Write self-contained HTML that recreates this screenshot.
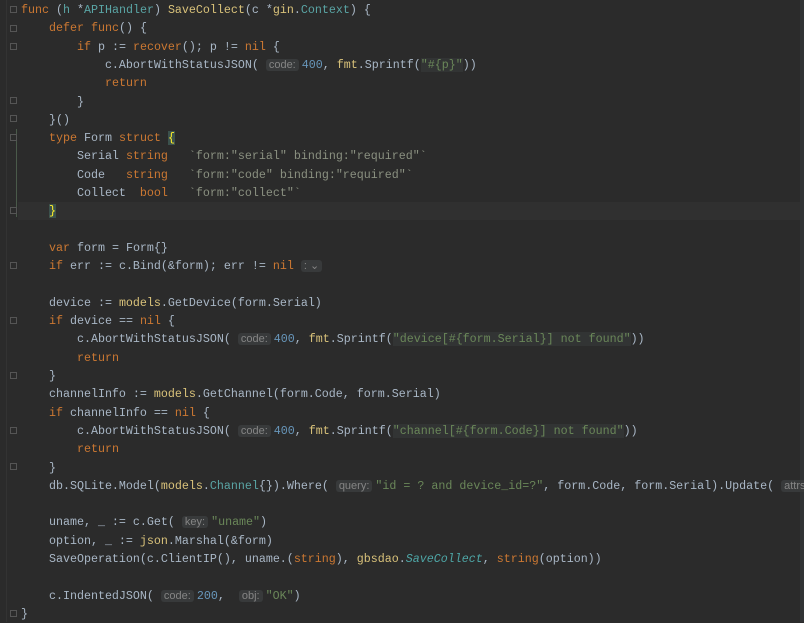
<!DOCTYPE html>
<html><head><meta charset="utf-8"><style>
body{margin:0;width:804px;height:622px;background:#2b2b2b;overflow:hidden;position:relative;font-family:"Liberation Mono",monospace;font-size:11.67px;color:#a9b7c6}
.l{position:absolute;left:21px;height:18.3px;line-height:18.3px;white-space:pre}
.k{color:#cc7832}.f{color:#d9c27a}.t{color:#5aa5a5}.n{color:#6897bb}.s{color:#6a8759}.g{color:#8a9080}.i{color:#4ea6a6;font-style:italic}
.h{background:#383a3b;color:#858585;font-family:"Liberation Sans",sans-serif;font-size:11px;padding:0 3px;border-radius:3px;margin-right:3px}
.sb{background:#323434}
.cur{position:absolute;left:18px;right:0;top:202px;height:18.3px;background:#303030}
.fold{position:absolute;left:10px;width:7px;height:7px;border:1px solid #555;box-sizing:border-box}
</style></head><body>
<div class="cur"></div>
<div style="position:absolute;left:16px;top:129px;width:1px;height:88px;background:#4a5a4a"></div>
<div style="position:absolute;left:6px;top:0;width:1px;height:622px;background:#333"></div>
<div style="position:absolute;left:800px;top:0;width:4px;height:622px;background:#313335"></div>
<div class="fold" style="top:6px"></div><div class="fold" style="top:25px"></div><div class="fold" style="top:43px"></div><div class="fold" style="top:97px"></div><div class="fold" style="top:115px"></div><div class="fold" style="top:134px"></div><div class="fold" style="top:207px"></div><div class="fold" style="top:317px"></div><div class="fold" style="top:372px"></div><div class="fold" style="top:427px"></div><div class="fold" style="top:463px"></div><div class="fold" style="top:610px"></div><div class="fold" style="top:262px"></div>
<div class="l" style="top:1px"><span class="k">func</span> (<span class="t">h</span> *<span class="t">APIHandler</span>) <span class="f">SaveCollect</span>(c *<span class="f">gin</span>.<span class="t">Context</span>) {</div>
<div class="l" style="top:19.3px">    <span class="k">defer</span> <span class="k">func</span>() {</div>
<div class="l" style="top:37.6px">        <span class="k">if</span> p := <span class="k">recover</span>(); p != <span class="k">nil</span> {</div>
<div class="l" style="top:55.9px">            c.AbortWithStatusJSON( <span class="h">code:</span><span class="n">400</span>, <span class="f">fmt</span>.Sprintf(<span class="s sb">"#{p}"</span>))</div>
<div class="l" style="top:74.2px">            <span class="k">return</span></div>
<div class="l" style="top:92.5px">        }</div>
<div class="l" style="top:110.8px">    }()</div>
<div class="l" style="top:129.1px">    <span class="k">type</span> Form <span class="k">struct</span> <span style="color:#ffef28;background:#3b514d">{</span></div>
<div class="l" style="top:147.4px">        Serial <span class="k">string</span>   <span class="g">`form:"serial" binding:"required"`</span></div>
<div class="l" style="top:165.7px">        Code   <span class="k">string</span>   <span class="g">`form:"code" binding:"required"`</span></div>
<div class="l" style="top:184px">        Collect  <span class="k">bool</span>   <span class="g">`form:"collect"`</span></div>
<div class="l" style="top:202.3px">    <span style="color:#ffef28;background:#3b514d">}</span></div>
<div class="l" style="top:238.9px">    <span class="k">var</span> form = Form{}</div>
<div class="l" style="top:257.2px">    <span class="k">if</span> err := c.Bind(&amp;form); err != <span class="k">nil</span> <span class="h">: ⌄</span></div>
<div class="l" style="top:293.8px">    device := <span class="f">models</span>.GetDevice(form.Serial)</div>
<div class="l" style="top:312.1px">    <span class="k">if</span> device == <span class="k">nil</span> {</div>
<div class="l" style="top:330.4px">        c.AbortWithStatusJSON( <span class="h">code:</span><span class="n">400</span>, <span class="f">fmt</span>.Sprintf(<span class="s sb">"device[#{form.Serial}] not found"</span>))</div>
<div class="l" style="top:348.7px">        <span class="k">return</span></div>
<div class="l" style="top:367px">    }</div>
<div class="l" style="top:385.3px">    channelInfo := <span class="f">models</span>.GetChannel(form.Code, form.Serial)</div>
<div class="l" style="top:403.6px">    <span class="k">if</span> channelInfo == <span class="k">nil</span> {</div>
<div class="l" style="top:421.9px">        c.AbortWithStatusJSON( <span class="h">code:</span><span class="n">400</span>, <span class="f">fmt</span>.Sprintf(<span class="s sb">"channel[#{form.Code}] not found"</span>))</div>
<div class="l" style="top:440.2px">        <span class="k">return</span></div>
<div class="l" style="top:458.5px">    }</div>
<div class="l" style="top:476.8px">    db.SQLite.Model(<span class="f">models</span>.<span class="t">Channel</span>{}).Where( <span class="h">query:</span><span class="s">"id = ? and device_id=?"</span>, form.Code, form.Serial).Update( <span class="h">attrs...</span></div>
<div class="l" style="top:513.4px">    uname, _ := c.Get( <span class="h">key:</span><span class="s">"uname"</span>)</div>
<div class="l" style="top:531.7px">    option, _ := <span class="f">json</span>.Marshal(&amp;form)</div>
<div class="l" style="top:550px">    SaveOperation(c.ClientIP(), uname.(<span class="k">string</span>), <span class="f">gbsdao</span>.<span class="i">SaveCollect</span>, <span class="k">string</span>(option))</div>
<div class="l" style="top:586.6px">    c.IndentedJSON( <span class="h">code:</span><span class="n">200</span>,  <span class="h">obj:</span><span class="s">"OK"</span>)</div>
<div class="l" style="top:604.9px">}</div>
</body></html>
